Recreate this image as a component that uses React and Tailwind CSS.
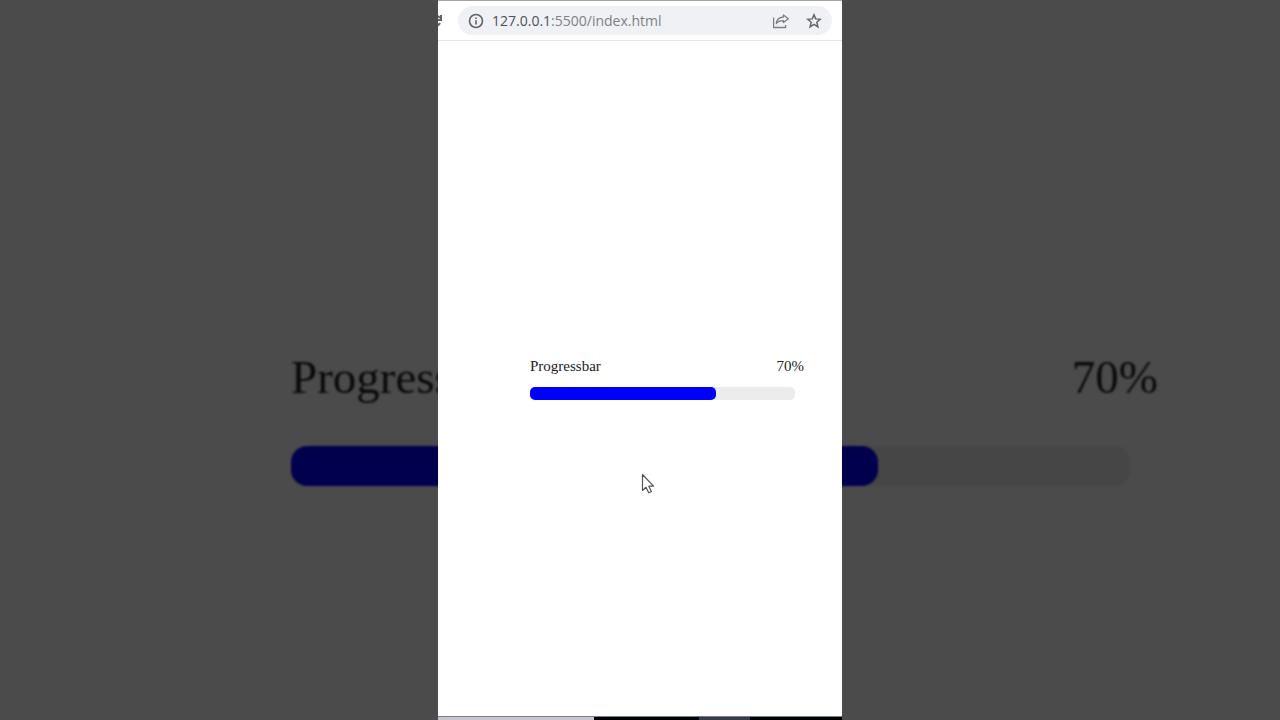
import React, { useState } from "react";

function ReloadIcon() {
    return (
        <svg viewBox="0 0 4 16" className="w-1 h-4 shrink-0" fill="none" stroke="#5f6368" strokeWidth="2" aria-hidden="true">
            <path d="M-4 4.5C-2 2.5 0 2.5 2 5" />
            <path d="M3 2v5h-4" />
            <path d="M-3 13c2 0 4-1 5-3" />
        </svg>
    );
}

function InfoIcon() {
    return (
        <svg viewBox="0 0 16 16" className="size-4 shrink-0" fill="none" stroke="#5f6368" strokeWidth="1.6" aria-hidden="true">
            <circle cx="8" cy="8" r="6.5" />
            <path d="M8 7.2v4.3M8 4.4v1.6" />
        </svg>
    );
}

function ShareIcon() {
    return (
        <svg
            viewBox="0 0 18 16"
            className="w-[18px] h-4"
            fill="none"
            stroke="#7c8084"
            strokeWidth="1.3"
            strokeLinejoin="round"
            aria-hidden="true"
        >
            <path d="M1.600 4.500v10h12V12" />
            <path d="M11.400 2l5 3.800-5 3.800V7.600C8.300 7.600 6 8.400 4.300 10.600c.4-3.500 2.800-6.200 7.100-6.600z" />
        </svg>
    );
}

function StarIcon() {
    return (
        <svg viewBox="0 0 16 16" className="size-4" fill="none" stroke="#63676c" strokeWidth="1.5" aria-hidden="true">
            <path d="M8 1.800l1.700 4.100 4.600.4-3.500 3 1.100 4.500L8 11.400l-3.900 2.400 1.100-4.500-3.500-3 4.600-.4z" />
        </svg>
    );
}

function Cursor() {
    return (
        <svg viewBox="0 0 14 22" className="absolute left-[203px] top-[473px] w-[14px] h-[22px]" aria-hidden="true">
            <path
                d="M1.500 1.500v16l3.500-3.300 2.700 5.600 2.700-1.300-2.600-5.300h4.700z"
                fill="white"
                stroke="#555"
                strokeWidth="1.2"
                strokeLinejoin="round"
            />
        </svg>
    );
}

function AddressBar() {
    const [path, setPath] = useState(":5500/index.html");

    return (
        <header className="flex items-center h-[41px] pr-2.5 gap-4 border-t border-b border-t-[#a5a3a8] border-b-[#e4e5e7] bg-white">
            <ReloadIcon />
            <div className="flex flex-1 min-w-0 items-center h-[29px] px-2.5 gap-2 rounded-full bg-[#eff1f4]">
                <InfoIcon />
                <label htmlFor="url" className="flex flex-1 min-w-0 items-center font-['Open_Sans',sans-serif] text-[14px] leading-5">
                    <span className="text-[#4e5257]">127.0.0.1</span>
                    <input
                        id="url"
                        type="text"
                        value={path}
                        onChange={e => setPath(e.target.value)}
                        className="flex-1 min-w-0 bg-transparent text-[#7e8185] outline-none"
                    />
                </label>
                <div className="flex items-center gap-4">
                    <button type="button" aria-label="Share">
                        <ShareIcon />
                    </button>
                    <button type="button" aria-label="Bookmark">
                        <StarIcon />
                    </button>
                </div>
            </div>
        </header>
    );
}

function Progress({ value }) {
    return (
        <div className="w-[274px] text-[15px] leading-[22px] text-[#222]">
            <div className="flex justify-between">
                <span id="progress-label">Progressbar</span>
                <span>{value}%</span>
            </div>
            <div
                role="progressbar"
                aria-labelledby="progress-label"
                aria-valuenow={value}
                className="mt-2.5 w-[265px] h-[13px] rounded-[5px] bg-[#ececec]"
            >
                <div className="h-full rounded-[5px] bg-[#00f]" style={{ width: `${value}%` }} />
            </div>
        </div>
    );
}

// enlarged, dimmed copy of the progress bar behind the page
function Backdrop({ value }) {
    return (
        <div aria-hidden="true" className="col-start-1 row-start-1 pt-[350px] pl-[291px] bg-[#4b4b4b] overflow-hidden">
            <div className="w-[867px] text-[47px] leading-[54px] text-[#0a0a0a] blur-[1px]">
                <div className="flex justify-between">
                    <span>Progressbar</span>
                    <span>{value}%</span>
                </div>
                <div className="mt-[42px] w-[839px] h-10 rounded-2xl bg-[#464646]">
                    <div className="h-full rounded-2xl bg-[#00004c]" style={{ width: `${value}%` }} />
                </div>
            </div>
        </div>
    );
}

export default function App() {
    const value = 70;

    return (
        <div className="grid h-screen overflow-hidden font-['Liberation_Serif',serif]">
            <Backdrop value={value} />
            <div className="relative col-start-1 row-start-1 justify-self-center flex flex-col h-screen aspect-[101/180] bg-white overflow-hidden">
                <AddressBar />
                <main className="flex-1 pt-[314px] pl-[92px]">
                    <Progress value={value} />
                </main>
                <footer className="flex h-1 border-t border-[#71818c] bg-black">
                    <div className="w-[156px] bg-[#c9c5cc]" />
                    <div className="ml-[105px] w-[51px] bg-[#363b49]" />
                </footer>
                <Cursor />
            </div>
        </div>
    );
}
